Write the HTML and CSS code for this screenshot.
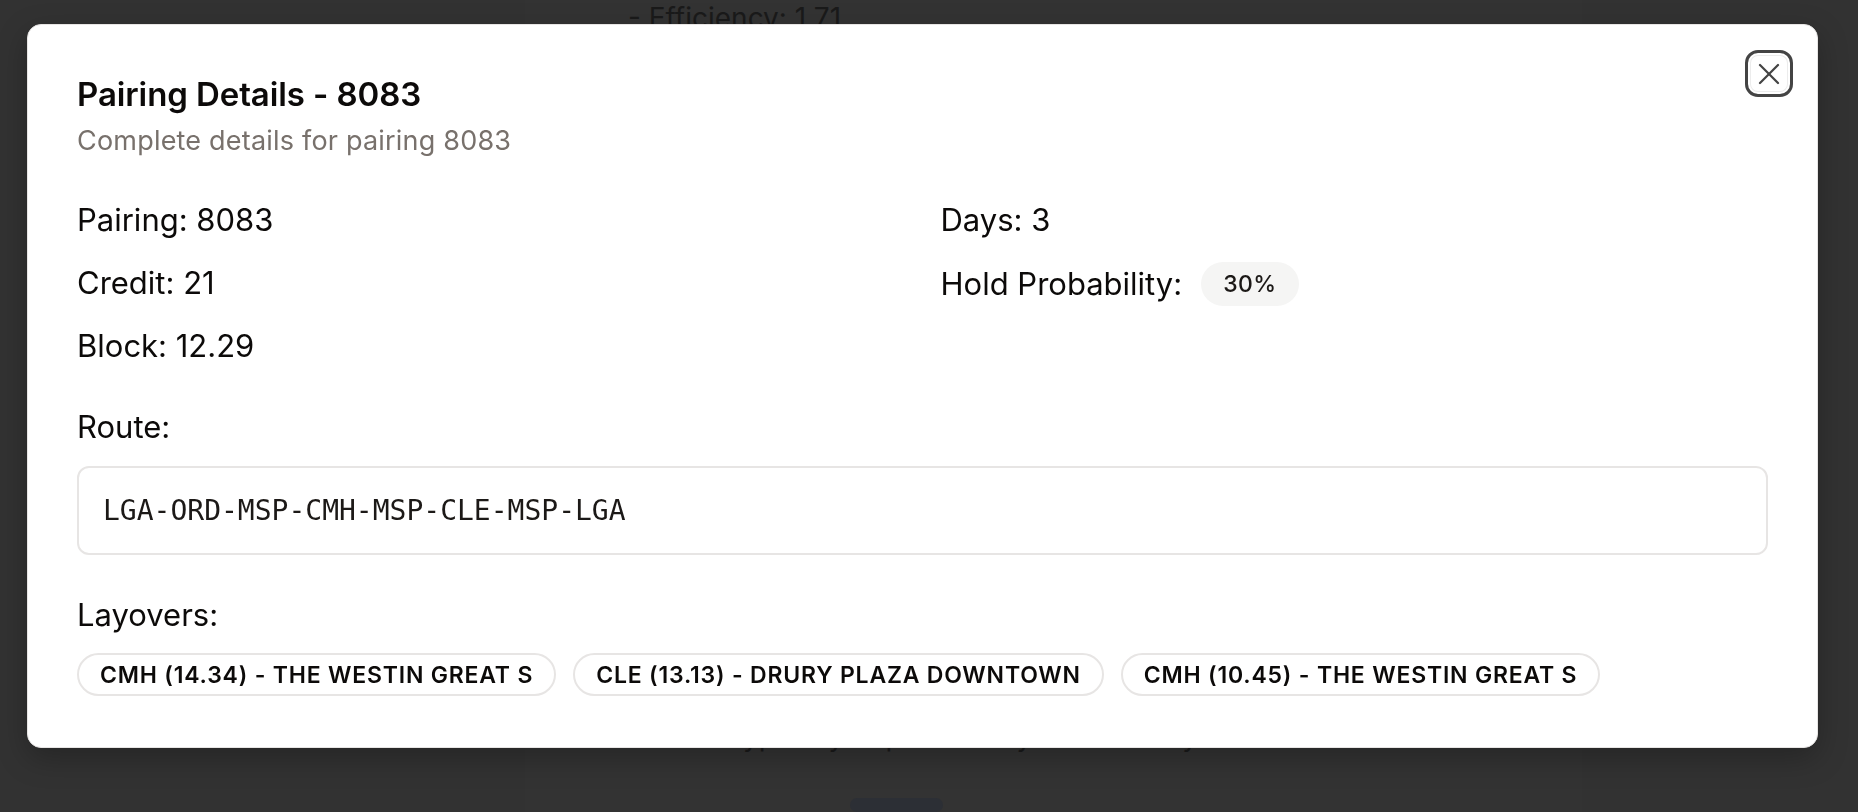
FILE: index.html
```html
<!DOCTYPE html>
<html lang="en">
<head>
<meta charset="utf-8">
<title>Pairing Details - 8083</title>
<link rel="stylesheet" href="styles.css">
</head>
<body>
<div class="page">
  <div class="page-col">
    <p class="page-line">- Efficiency: 1.71</p>
    <p class="page-note">Hold typically depends on your seniority.</p>
    <div class="page-btn"></div>
  </div>
</div>
<div class="overlay">
  <div class="dialog" role="dialog">
    <button class="close" aria-label="Close">
      <svg width="36" height="36" viewBox="0 0 24 24" fill="none" stroke="currentColor" stroke-width="1.5" stroke-linecap="round" stroke-linejoin="round"><path d="M18 6 6 18"/><path d="m6 6 12 12"/></svg>
    </button>
    <header class="head">
      <h2 class="title">Pairing Details - 8083</h2>
      <p class="subtitle">Complete details for pairing 8083</p>
    </header>
    <div class="facts">
      <div class="facts-col">
        <p class="fact">Pairing: 8083</p>
        <p class="fact">Credit: 21</p>
        <p class="fact">Block: 12.29</p>
      </div>
      <div class="facts-col">
        <p class="fact">Days: 3</p>
        <div class="fact hold"><span>Hold Probability:</span><span class="badge">30%</span></div>
      </div>
    </div>
    <section class="block route-block">
      <h3 class="label">Route:</h3>
      <div class="route">LGA-ORD-MSP-CMH-MSP-CLE-MSP-LGA</div>
    </section>
    <section class="block">
      <h3 class="label">Layovers:</h3>
      <div class="chips">
        <span class="chip">CMH (14.34) - THE WESTIN GREAT S</span>
        <span class="chip">CLE (13.13) - DRURY PLAZA DOWNTOWN</span>
        <span class="chip">CMH (10.45) - THE WESTIN GREAT S</span>
      </div>
    </section>
  </div>
</div>
</body>
</html>
```

FILE: styles.css
```css
* { box-sizing: border-box; }
html, body { margin: 0; padding: 0; }
body {
  width: 1858px;
  height: 812px;
  overflow: hidden;
  background: #323232;
  font-family: Inter, "Noto Sans", "Liberation Sans", sans-serif;
  color: #0c0a09;
}
.page {
  display: flex;
  height: 812px;
  padding-left: 525px;
}
.page-col {
  width: 1057px;
  background: #333333;
  padding-left: 103px;
  display: flex;
  flex-direction: column;
}
.page-line {
  margin: -2px 0 0;
  font-size: 28px;
  line-height: 40px;
  color: #1a1a1a;
}
.page-note {
  margin: 678px 0 0 36px;
  font-size: 28px;
  line-height: 40px;
  color: #1a1a1a;
  white-space: nowrap;
}
.page-btn {
  margin: 42px 0 0 222px;
  width: 93px;
  height: 44px;
  border-radius: 8px;
  background: #2c2f35;
}
.overlay {
  position: fixed;
  inset: 0;
  padding: 24px 40px 0 27px;
}
.dialog {
  position: relative;
  width: 1791px;
  background: #ffffff;
  border: 1px solid #e7e5e4;
  border-radius: 14px;
  box-shadow: 0 10px 30px rgba(0,0,0,0.25);
  padding: 51px 49px 51px 49px;
}
.close {
  position: absolute;
  top: 25px;
  right: 24px;
  width: 48px;
  height: 47px;
  border: 3px solid #444444;
  border-radius: 13px;
  background: #fff;
  color: #444444;
  display: flex;
  align-items: center;
  justify-content: center;
  padding: 0;
  box-shadow: inset 0 0 0 2px #fff, inset 0 0 0 3px #ececec;
}
.head { display: flex; flex-direction: column; gap: 11px; }
.title {
  margin: 0;
  font-size: 33px;
  line-height: 36px;
  font-weight: 600;
  letter-spacing: -0.1px;
}
.subtitle {
  margin: 0;
  font-size: 27px;
  line-height: 36px;
  color: #78716c;
  letter-spacing: 0.2px;
}
.facts {
  display: grid;
  grid-template-columns: 1fr 1fr;
  column-gap: 36px;
  margin-top: 40px;
}
.facts-col { display: flex; flex-direction: column; gap: 21px; }
.fact {
  margin: 0;
  font-size: 31px;
  line-height: 42px;
}
.hold { display: flex; align-items: center; gap: 19px; }
.badge {
  display: inline-flex;
  align-items: center;
  height: 44px;
  padding: 0 22px;
  border-radius: 22px;
  background: #f5f5f4;
  color: #1c1917;
  font-size: 23px;
  font-weight: 500;
  letter-spacing: 0.4px;
}
.block { margin-top: 39px; }
.label {
  margin: 0;
  font-size: 31px;
  line-height: 42px;
  font-weight: 400;
}
.route {
  margin-top: 18px;
  height: 89px;
  border: 2px solid #e7e5e4;
  border-radius: 12px;
  padding: 0 24px;
  display: flex;
  align-items: center;
  font-family: "DejaVu Sans Mono", "Liberation Mono", monospace;
  font-size: 28px;
  letter-spacing: 0;
  color: #1c1917;
}
.chips {
  margin-top: 17px;
  display: flex;
  flex-wrap: wrap;
  gap: 17px;
}
.chip {
  display: inline-flex;
  align-items: center;
  height: 43px;
  padding: 0 21px;
  border: 2px solid #e7e5e4;
  border-radius: 22px;
  font-size: 23px;
  font-weight: 600;
  color: #0c0a09;
  letter-spacing: 0.8px;
}
```
